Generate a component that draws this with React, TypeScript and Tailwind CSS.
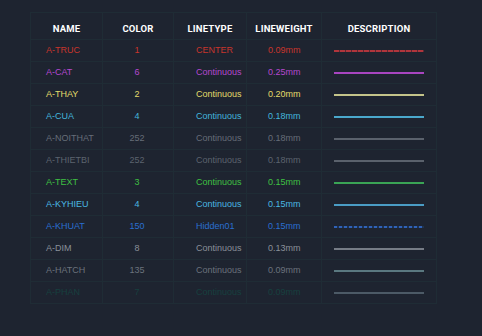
const layers = [
  { name: "A-TRUC", color: "1", type: "CENTER", weight: "0.09mm", tone: "text-[#c8352c]", line: "bg-[repeating-linear-gradient(90deg,#b0353c_0_5px,#5a2a34_5px_6px)]" },
  { name: "A-CAT", color: "6", type: "Continuous", weight: "0.25mm", tone: "text-[#b548cf]", line: "bg-[#a845c0]" },
  { name: "A-THAY", color: "2", type: "Continuous", weight: "0.20mm", tone: "text-[#e3dc6a]", line: "bg-[#c4c48a]" },
  { name: "A-CUA", color: "4", type: "Continuous", weight: "0.18mm", tone: "text-[#43b6dc]", line: "bg-[#4aa8cc]" },
  { name: "A-NOITHAT", color: "252", type: "Continuous", weight: "0.18mm", tone: "text-[#666d78]", line: "bg-[#5a616c]" },
  { name: "A-THIETBI", color: "252", type: "Continuous", weight: "0.18mm", tone: "text-[#5c636e]", line: "bg-[#5a616c]" },
  { name: "A-TEXT", color: "3", type: "Continuous", weight: "0.15mm", tone: "text-[#3fc043]", line: "bg-[#3aa455]" },
  { name: "A-KYHIEU", color: "4", type: "Continuous", weight: "0.15mm", tone: "text-[#4ab8e2]", line: "bg-[#4a9cc4]" },
  { name: "A-KHUAT", color: "150", type: "Hidden01", weight: "0.15mm", tone: "text-[#2a6fd0]", line: "bg-[repeating-linear-gradient(90deg,#2f62b8_0_3px,#1f3350_3px_5px)]" },
  { name: "A-DIM", color: "8", type: "Continuous", weight: "0.13mm", tone: "text-[#8a9099]", line: "bg-[#767c86]" },
  { name: "A-HATCH", color: "135", type: "Continuous", weight: "0.09mm", tone: "text-[#6b727c]", line: "bg-[#5a7880]" },
  { name: "A-PHAN", color: "7", type: "Continuous", weight: "0.09mm", tone: "text-[#17403f]", line: "bg-[#4c5a66]" },
]

const cell = "border-r border-b border-[#1f2c35]"

export default function App() {
  return (
    <div className="w-[482px] h-[336px] bg-[#1e2430] pt-[12px] pl-[30px]" style={{ fontFamily: '"Liberation Sans", Arial, sans-serif' }}>
      <div className="w-[407px] border-l border-t border-[#1f2c35]">
        {/* header */}
        <div className="flex h-[27px] text-[9.5px] font-bold text-white tracking-[0.2px]" style={{ fontFamily: "Roboto, sans-serif" }}>
          <div className={`w-[72px] flex items-center justify-center pt-[7px] ${cell}`}>NAME</div>
          <div className={`w-[71px] flex items-center justify-center pt-[7px] ${cell}`}>COLOR</div>
          <div className={`w-[73px] flex items-center justify-center pt-[7px] ${cell}`}>LINETYPE</div>
          <div className={`w-[75px] flex items-center justify-center pt-[7px] ${cell}`}>LINEWEIGHT</div>
          <div className={`flex-1 flex items-center justify-center pt-[7px] ${cell}`}>DESCRIPTION</div>
        </div>

        {layers.map((l) => (
          <div key={l.name} className={`flex h-[22px] text-[9px] ${l.tone}`}>
            <div className={`w-[72px] flex items-center pl-[15px] ${cell}`}>{l.name}</div>
            <div className={`w-[71px] flex items-center justify-center pr-[2px] ${cell}`}>{l.color}</div>
            <div className={`w-[73px] flex items-center pl-[22px] ${cell}`}>{l.type}</div>
            <div className={`w-[75px] flex items-center pl-[21px] ${cell}`}>{l.weight}</div>
            <div className={`flex-1 flex items-center pl-[12px] ${cell}`}>
              <div className={`w-[90px] h-[2px] ${l.line}`} />
            </div>
          </div>
        ))}
      </div>
    </div>
  )
}
